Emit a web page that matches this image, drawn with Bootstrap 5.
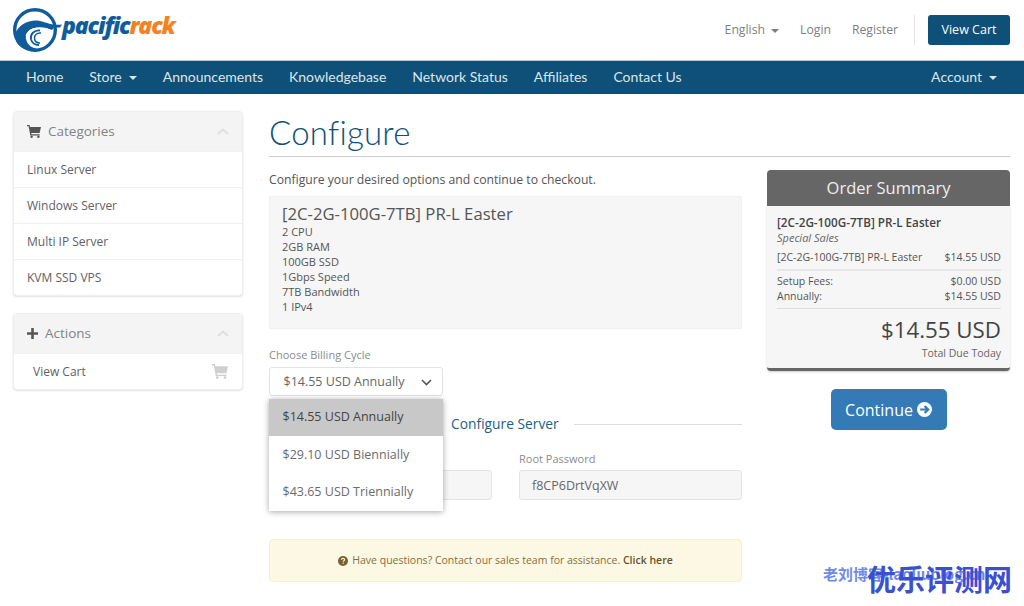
<!DOCTYPE html>
<html lang="en">
<head>
<meta charset="utf-8">
<title>Configure</title>
<link href="https://cdn.jsdelivr.net/npm/bootstrap@5.3.0/dist/css/bootstrap.min.css" rel="stylesheet">
<style>
html,body{height:606px;overflow:hidden}
body{font-family:"Open Sans","Noto Sans",sans-serif;font-size:12px;color:#58595b;background:#fff;position:relative}
.top-head{height:60px;padding:0 14px 0 13px}
.logo-box{width:170px;height:52px;margin-top:7px}
.logo-word{font-family:"Open Sans",sans-serif;font-weight:800;font-style:italic;font-size:23px;letter-spacing:-1.15px;line-height:1;margin:7px 0 0 0}
.logo-a{color:#0f5c9c}.logo-b{color:#f58220}
.head-link{color:#7c7f82;font-size:12.2px;text-decoration:none}
.head-links{gap:21px;margin-right:16px}
.caret-s{display:inline-block;border-top:4px solid currentColor;border-left:4px solid transparent;border-right:4px solid transparent;vertical-align:middle;margin-left:3px}
.head-sep{width:1px;height:30px;background:#e5e5e5;margin-right:13px}
.cart-btn{background:#0e5077;color:#fff;font-size:12.5px;border-radius:3px;height:30px;width:82px;padding:0;line-height:30px;border:0}
.main-nav{background:#0e5077;height:34px;border-top:1px solid #b9c4cb;padding:0 27px 2px 26px;font-family:Lato,sans-serif;font-size:14px}
.main-nav a{color:#dbe5ec;text-decoration:none}
.nav-items{gap:26px}
.nav-items .caret-s{margin-left:7px}
.page-body{padding:17px 14px 0 13px;gap:26px}
.side-col{width:230px;flex:none}
.main-col{flex:1;min-width:0}
.side-box{border:1px solid #eee;border-radius:4px;box-shadow:0 1px 2px rgba(0,0,0,.12);margin-bottom:17px;background:#fff}
.side-head{height:39px;background:#f4f4f4;padding:0 13px;font-size:13.5px;color:#818385;border-radius:4px 4px 0 0}
.side-head svg.ic{margin-right:7px}
.side-item{height:36px;padding:0 13px;font-size:12px;color:#5f6163;border-top:1px solid #f1f1f1}
.side-item:first-of-type{border-top:0}
.page-title{font-family:Lato,sans-serif;font-weight:300;font-size:33px;color:#0e5077;line-height:43px;height:46px;border-bottom:1px solid #ccc;margin:0 0 13px;letter-spacing:.2px}
.intro{font-size:12.2px;line-height:18px;margin:1px 0 7px;color:#555}
.left-pane{width:473px;flex:none}
.right-pane{width:243px;flex:none}
.prod-box{height:133px;background:#f6f6f6;border:1px solid #f1f1f1;padding:6px 12px;line-height:15px;font-size:11px;color:#555}
.prod-name{font-size:16.7px;line-height:21px;color:#555}
.lbl{font-size:11px;line-height:16px;color:#8a8c8e;margin:0 0 4px}
.cycle-wrap{margin-top:18px;position:relative}
.cycle-sel{width:174px;height:29px;border:1px solid #e2e2e2;border-radius:3px;padding:1px 10px 0 13.5px;font-size:12.5px;color:#666}
.cycle-menu{position:absolute;left:0;top:52px;width:174px;background:#fff;box-shadow:0 1px 6px rgba(0,0,0,.35);z-index:5;font-size:12.5px}
.cycle-opt{height:37.3px;padding:0 13.5px;color:#696b6d}
.cycle-on{background:#c8c8c8;color:#444}
.sect-row{margin-top:18px;padding-left:182px;height:20px;font-size:13.8px;color:#1d5f86;gap:15px}
.sect-line{flex:1;height:1px;background:#ddd}
.field-row{margin-top:17px;gap:27px}
.field-row .lbl{margin-bottom:3px}
.field-cell{width:223px;flex:none}
.fake-input{height:30px;background:#f6f6f6;border:1px solid #e4e4e4;border-radius:3px;padding:2px 12px 0;font-size:12.5px;color:#666}
.help-box{margin-top:39px;height:43px;background:#fcf8e3;border:1px solid #f7efd0;border-radius:4px;color:#8a6d3b;font-size:10.5px}
.help-box b{color:#66512c;font-weight:600}
.sum-head{height:36px;background:#666;color:#eee;font-size:16.5px;text-align:center;line-height:36px;border-radius:4px 4px 0 0}
.sum-body{background:#f6f6f6;border-bottom:3px solid #666;border-radius:0 0 4px 4px;padding:9px 9px 4px 10px;font-size:10.5px;line-height:15px;color:#555;height:165px;box-shadow:0 1px 2px rgba(0,0,0,.2)}
.sum-name{font-size:11.7px;font-weight:600;color:#444}
.sum-cat{font-style:italic;color:#666;font-size:11px}
.sum-line{margin-top:5px}
.sum-rule{border-top:2px solid #e7e7e7;margin:4px 0 3px}
.sum-rule2{border-top:1px solid #ddd;margin:4px 0 0}
.sum-total{font-size:22.3px;line-height:30px;text-align:right;color:#444;margin-top:6px}
.sum-due{text-align:right;font-size:10.5px;color:#666;line-height:14px;margin-top:1px}
.go-btn{background:#337ab7;color:#fff;font-size:16px;width:116px;height:41px;padding:0;border:0;border-radius:5px;gap:4px}
.go-wrap{margin-top:18px}
.stamp{position:absolute;right:12px;bottom:12px;font-family:"Noto Sans CJK SC",sans-serif;font-weight:700;color:#3b50cf;font-size:29px;line-height:32px;white-space:nowrap;z-index:9}
.stamp-under{position:absolute;left:823px;bottom:22px;font-family:"Noto Sans CJK SC",sans-serif;font-weight:700;color:#6f89ea;font-size:15px;line-height:20px;white-space:nowrap;z-index:8}
</style>
</head>
<body>
<header class="top-head d-flex align-items-start justify-content-between">
  <div class="logo-box d-flex">
    <svg width="49" height="46" viewBox="0 0 49 46" fill="none">
      <circle cx="22" cy="23" r="20.3" stroke="#0f5c9c" stroke-width="3.4"/>
      <path d="M2 27C6 17 17 12 27 14C34 15.500 40 19 49 17.500L47 20.500L41 20.500L39 23C33 20 25 19 19 22C13 25 12 33 17 38C20 41 25 43 30 42C22 46 8 44 3 34Z" fill="#0f5c9c"/>
      <path d="M25 21.500C17 21 12 27 14 33C15 37 19 40 24 40.500" stroke="#fff" stroke-width="1.400"/>
      <path d="M27 23.500C21 23 17 27 18 32.500C19 36 22 38 26 38" stroke="#0f5c9c" stroke-width="1.800"/>
      <path d="M27 21.500C20 20.500 14 24 13 29" stroke="#fff" stroke-width="1"/>
      <path d="M28 26C24 25.500 21 28 21.500 32C22 34.500 24 36 27 36" stroke="#0f5c9c" stroke-width="1.500"/>
    </svg>
    <div class="logo-word"><span class="logo-a">pacific</span><span class="logo-b">rack</span></div>
  </div>
  <div class="d-flex align-items-center" style="margin-top:15px">
    <div class="head-links d-flex align-items-center">
      <a class="head-link" href="#">English <span class="caret-s"></span></a>
      <a class="head-link" href="#">Login</a>
      <a class="head-link" href="#">Register</a>
    </div>
    <div class="head-sep"></div>
    <button class="btn cart-btn" type="button">View Cart</button>
  </div>
</header>
<nav class="main-nav d-flex align-items-center justify-content-between">
  <div class="nav-items d-flex">
    <a href="#">Home</a><a href="#">Store<span class="caret-s"></span></a><a href="#">Announcements</a><a href="#">Knowledgebase</a><a href="#">Network Status</a><a href="#">Affiliates</a><a href="#">Contact Us</a>
  </div>
  <a href="#">Account<span class="caret-s" style="margin-left:7px"></span></a>
</nav>
<div class="page-body d-flex">
  <aside class="side-col">
    <div class="side-box">
      <div class="side-head d-flex align-items-center">
        <svg class="ic" width="14" height="13" viewBox="0 0 14 13"><path d="M0 0H2.600L3 2H14L12.600 8H4.200L4.500 9.300H12.600V10.500H3.300L1.600 1.300H0Z" fill="#555"/><circle cx="4.600" cy="11.800" r="1.200" fill="#555"/><circle cx="11.400" cy="11.800" r="1.200" fill="#555"/></svg>
        <span>Categories</span>
        <svg class="ms-auto" width="12" height="7" viewBox="0 0 12 7"><path d="M1 6L6 1.500L11 6" fill="none" stroke="#dedede" stroke-width="2"/></svg>
      </div>
      <div class="side-item d-flex align-items-center">Linux Server</div>
      <div class="side-item d-flex align-items-center">Windows Server</div>
      <div class="side-item d-flex align-items-center">Multi IP Server</div>
      <div class="side-item d-flex align-items-center">KVM SSD VPS</div>
    </div>
    <div class="side-box">
      <div class="side-head d-flex align-items-center">
        <svg class="ic" width="11" height="11" viewBox="0 0 11 11"><path d="M4.200 0H6.800V4.200H11V6.800H6.800V11H4.200V6.800H0V4.200H4.200Z" fill="#555"/></svg>
        <span>Actions</span>
        <svg class="ms-auto" width="12" height="7" viewBox="0 0 12 7"><path d="M1 6L6 1.500L11 6" fill="none" stroke="#dedede" stroke-width="2"/></svg>
      </div>
      <div class="side-item d-flex align-items-center" style="padding-left:19px;padding-right:14px">View Cart
        <svg class="ms-auto" width="16" height="15" viewBox="0 0 14 13"><path d="M0 0H2.600L3 2H14L12.600 8H4.200L4.500 9.300H12.600V10.500H3.300L1.600 1.300H0Z" fill="#cfcfcf"/><circle cx="4.600" cy="11.800" r="1.200" fill="#cfcfcf"/><circle cx="11.400" cy="11.800" r="1.200" fill="#cfcfcf"/></svg>
      </div>
    </div>
  </aside>
  <main class="main-col">
    <h1 class="page-title">Configure</h1>
    <div class="d-flex justify-content-between">
      <div class="left-pane">
        <p class="intro">Configure your desired options and continue to checkout.</p>
        <div class="prod-box">
          <div class="prod-name">[2C-2G-100G-7TB] PR-L Easter</div>
          2 CPU<br>2GB RAM<br>100GB SSD<br>1Gbps Speed<br>7TB Bandwidth<br>1 IPv4
        </div>
        <div class="cycle-wrap">
          <p class="lbl">Choose Billing Cycle</p>
          <div class="cycle-sel d-flex align-items-center justify-content-between">
            <span>$14.55 USD Annually</span>
            <svg width="11" height="7" viewBox="0 0 11 7"><path d="M1 1L5.500 5.500L10 1" fill="none" stroke="#555" stroke-width="1.600"/></svg>
          </div>
          <div class="cycle-menu">
            <div class="cycle-opt cycle-on d-flex align-items-center">$14.55 USD Annually</div>
            <div class="cycle-opt d-flex align-items-center">$29.10 USD Biennially</div>
            <div class="cycle-opt d-flex align-items-center">$43.65 USD Triennially</div>
          </div>
        </div>
        <div class="sect-row d-flex align-items-center"><span>Configure Server</span><span class="sect-line"></span></div>
        <div class="field-row d-flex">
          <div class="field-cell"><p class="lbl">&nbsp;</p><div class="fake-input d-flex align-items-center"></div></div>
          <div class="field-cell"><p class="lbl">Root Password</p><div class="fake-input d-flex align-items-center">f8CP6DrtVqXW</div></div>
        </div>
        <div class="help-box d-flex align-items-center justify-content-center gap-1">
          <svg width="10" height="10" viewBox="0 0 10 10"><circle cx="5" cy="5" r="5" fill="#7a5f30"/><path d="M3.400 3.800C3.500 2.800 4.200 2.400 5 2.400C6 2.400 6.600 3 6.600 3.700C6.600 4.800 5.200 4.700 5.200 5.800" fill="none" stroke="#fcf8e3" stroke-width="1.100"/><rect x="4.600" y="6.600" width="1.200" height="1.200" fill="#fcf8e3"/></svg>
          <span>Have questions? Contact our sales team for assistance. <b>Click here</b></span>
        </div>
      </div>
      <div class="right-pane">
        <div class="sum-head">Order Summary</div>
        <div class="sum-body">
          <div class="sum-name">[2C-2G-100G-7TB] PR-L Easter</div>
          <div class="sum-cat">Special Sales</div>
          <div class="sum-line d-flex justify-content-between"><span>[2C-2G-100G-7TB] PR-L Easter</span><span>$14.55 USD</span></div>
          <div class="sum-rule"></div>
          <div class="d-flex justify-content-between"><span>Setup Fees:</span><span>$0.00 USD</span></div>
          <div class="d-flex justify-content-between"><span>Annually:</span><span>$14.55 USD</span></div>
          <div class="sum-rule2"></div>
          <div class="sum-total">$14.55 USD</div>
          <div class="sum-due">Total Due Today</div>
        </div>
        <div class="go-wrap d-flex justify-content-center">
          <button class="btn go-btn d-flex align-items-center justify-content-center" type="button">Continue
            <svg width="15" height="15" viewBox="0 0 15 15"><circle cx="7.500" cy="7.500" r="7.500" fill="#fff"/><path d="M3.200 7.500H10.500M7.600 4L11.200 7.500L7.600 11" fill="none" stroke="#337ab7" stroke-width="2.200"/></svg>
          </button>
        </div>
      </div>
    </div>
  </main>
</div>
<div class="stamp-under">老刘博客-laoliublog.cn</div>
<div class="stamp">优乐评测网</div>
</body>
</html>
